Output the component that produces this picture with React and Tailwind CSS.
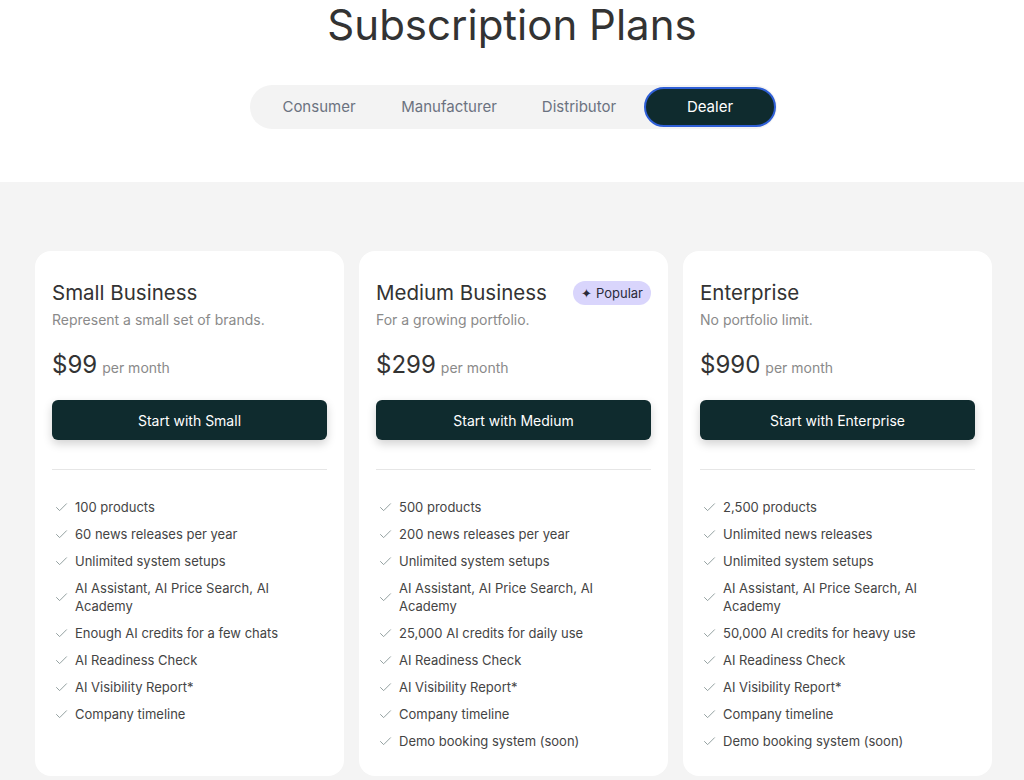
import { Check } from 'lucide-react';

const tabs = ['Consumer', 'Manufacturer', 'Distributor', 'Dealer'];

const plans = [
  {
    name: 'Small Business',
    blurb: 'Represent a small set of brands.',
    price: '$99',
    cta: 'Start with Small',
    features: [
      '100 products',
      '60 news releases per year',
      'Unlimited system setups',
      'AI Assistant, AI Price Search, AI Academy',
      'Enough AI credits for a few chats',
      'AI Readiness Check',
      'AI Visibility Report*',
      'Company timeline',
    ],
  },
  {
    name: 'Medium Business',
    blurb: 'For a growing portfolio.',
    price: '$299',
    cta: 'Start with Medium',
    popular: true,
    features: [
      '500 products',
      '200 news releases per year',
      'Unlimited system setups',
      'AI Assistant, AI Price Search, AI Academy',
      '25,000 AI credits for daily use',
      'AI Readiness Check',
      'AI Visibility Report*',
      'Company timeline',
      'Demo booking system (soon)',
    ],
  },
  {
    name: 'Enterprise',
    blurb: 'No portfolio limit.',
    price: '$990',
    cta: 'Start with Enterprise',
    features: [
      '2,500 products',
      'Unlimited news releases',
      'Unlimited system setups',
      'AI Assistant, AI Price Search, AI Academy',
      '50,000 AI credits for heavy use',
      'AI Readiness Check',
      'AI Visibility Report*',
      'Company timeline',
      'Demo booking system (soon)',
    ],
  },
];

function PlanCard({ plan }) {
  return (
    <div className="bg-white rounded-2xl px-[17px] pt-[28px] pb-[26px] flex flex-col">
      <div className="flex items-center justify-between">
        <h3 className="text-[20.5px] leading-[28px] text-[#333333]">{plan.name}</h3>
        {plan.popular && (
          <span className="bg-[#d9d5fc] text-[#2b2b3a] text-[13px] leading-[24px] px-[8px] rounded-full">
            ✦ Popular
          </span>
        )}
      </div>
      <p className="mt-[3px] text-[14px] leading-[20px] text-[#8a8a8a]">{plan.blurb}</p>
      <div className="mt-[19px] flex items-baseline gap-[5px]">
        <span className="text-[24px] leading-[32px] text-[#333333]">{plan.price}</span>
        <span className="text-[14px] text-[#8a8a8a]">per month</span>
      </div>
      <button className="mt-[19px] h-[40px] w-full rounded-md bg-[#0f2b2e] text-white text-[14px] shadow-[0_4px_10px_rgba(0,0,0,0.18)]">
        {plan.cta}
      </button>
      <div className="mt-[29px] h-px bg-[#e6e6e6]" />
      <ul className="mt-[28px] flex flex-col gap-[9px]">
        {plan.features.map((f) => (
          <li key={f} className="flex items-center gap-[6px] text-[13px] leading-[18px] text-[#444444]">
            <Check className="w-[15px] h-[15px] shrink-0 text-[#8c9a9a] ml-[2px]" strokeWidth={1.5} />
            <span>{f}</span>
          </li>
        ))}
      </ul>
    </div>
  );
}

export default function App() {
  return (
    <main className="min-h-screen bg-[#f4f4f4]" style={{ fontFamily: 'Inter, "Noto Sans", sans-serif' }}>
      <section className="bg-white h-[182px] flex flex-col items-center">
        <h1 className="mt-[4px] text-[42px] leading-none text-[#333333]">Subscription Plans</h1>
        <div className="mt-[39px] ml-[3px] h-[44px] bg-[#f3f3f3] rounded-full flex items-center pl-[4px] pr-[1px]">
          {tabs.map((t) => (
            <button
              key={t}
              className={
                t === 'Dealer'
                  ? 'w-[132px] h-[40px] rounded-full bg-[#0f2b2e] text-white text-[15px] border-2 border-[#2f5fd6]'
                  : 'w-[130px] h-[40px] rounded-full text-[#6b7280] text-[15px]'
              }
            >
              {t}
            </button>
          ))}
        </div>
      </section>
      <section className="pt-[69px] pl-[35px] pr-[32px] pb-[20px]">
        <div className="grid grid-cols-3 gap-[15px]">
          {plans.map((p) => (
            <PlanCard key={p.name} plan={p} />
          ))}
        </div>
      </section>
    </main>
  );
}
